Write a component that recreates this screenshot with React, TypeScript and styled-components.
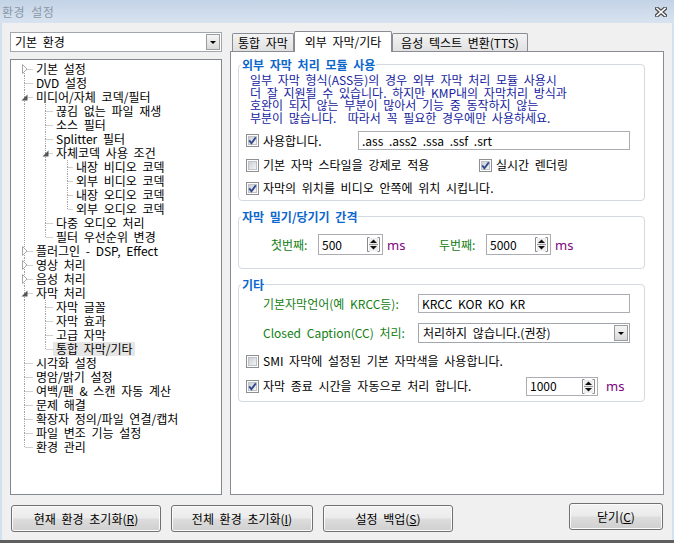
import React from 'react';
import styled, { createGlobalStyle } from 'styled-components';

const GlobalStyle = createGlobalStyle`
  body {
    margin: 0;
    font-family: "Noto Sans CJK KR", "Noto Sans", sans-serif;
    font-size: 12px;
    word-spacing: 3px;
  }
`;

const Window = styled.div`
  width: 674px;
  height: 543px;
  box-sizing: border-box;
  display: flex;
  flex-direction: column;
  background: #f0f0f0;
  border-bottom: 3px solid #5f5f5f;
  color: #000;
`;

const TitleBar = styled.div`
  height: 23px;
  flex: none;
  display: flex;
  align-items: center;
  justify-content: space-between;
  padding: 0 7px 0 2px;
  background: linear-gradient(#c3d3e6, #d8e3f0);
`;

const TitleText = styled.span`
  color: #8b98a8;
  font-size: 12px;
  line-height: 14px;
  letter-spacing: 0.5px;
`;

const Body = styled.div`
  flex: 1;
  display: flex;
  flex-direction: column;
  padding: 8px 8px 0 8px;
  border-left: 2px solid #d3e0ee;
  border-right: 2px solid #d3e0ee;
`;

const Main = styled.div`
  height: 464px;
  display: flex;
  gap: 8px;
`;

const LeftCol = styled.div`
  width: 212px;
  display: flex;
  flex-direction: column;
  gap: 7px;
  padding-top: 1px;
`;

const Combo = styled.div<{ $w?: number }>`
  height: 20px;
  box-sizing: border-box;
  ${(p) => (p.$w ? `width: ${p.$w}px;` : '')}
  display: flex;
  align-items: center;
  justify-content: space-between;
  border: 1px solid #a2a7ae;
  background: #fff;
  padding: 0 1px 0 4px;
  line-height: 14px;
`;

const TreeBox = styled.div`
  flex: 1;
  border: 1px solid #828790;
  background: #fff;
  padding-top: 2px;
`;

const TreeRowEl = styled.div`
  height: 14px;
  display: flex;
  align-items: center;
`;

const TreeLabel = styled.span<{ $selected?: boolean }>`
  line-height: 14px;
  padding: 0 2px 0 3px;
  white-space: pre;
  background: ${(p) => (p.$selected ? '#e6e6e6' : 'transparent')};
`;

const RightCol = styled.div`
  flex: 1;
  display: flex;
  flex-direction: column;
`;

const TabStrip = styled.div`
  height: 20px;
  display: flex;
  align-items: flex-end;
  padding-left: 2px;
`;

const Tab = styled.div<{ $active?: boolean; $w: number }>`
  width: ${(p) => p.$w}px;
  height: ${(p) => (p.$active ? 21 : 18)}px;
  margin-bottom: ${(p) => (p.$active ? -1 : 0)}px;
  box-sizing: border-box;
  position: relative;
  z-index: ${(p) => (p.$active ? 1 : 0)};
  border: 1px solid #898c95;
  border-bottom: none;
  border-radius: 2px 2px 0 0;
  background: ${(p) => (p.$active ? '#fff' : 'linear-gradient(#f3f3f3, #e1e1e1)')};
  display: flex;
  align-items: center;
  justify-content: center;
  line-height: 14px;
  white-space: pre;
`;

const Panel = styled.div`
  flex: 1;
  border: 1px solid #898c95;
  background: #fff;
  padding: 6px 18px 0 7px;
`;

const Group = styled.fieldset<{ $mt?: number; $pb: number }>`
  margin: ${(p) => p.$mt ?? 0}px 0 0 0;
  padding: 0 0 ${(p) => p.$pb}px 0;
  border: 1px solid #d3d9df;
  border-radius: 4px;
  min-width: 0;
`;

const Legend = styled.legend`
  margin-left: 2px;
  padding: 0 1px;
  font-weight: bold;
  color: #0c67cc;
  line-height: 13px;
  font-size: 12px;
`;

const Desc = styled.div`
  margin-top: 3px;
  padding-left: 11px;
  color: #16239e;
  line-height: 12.5px;
  white-space: pre;
`;

const Row = styled.div<{ $mt: number; $h: number; $pl: number }>`
  margin-top: ${(p) => p.$mt}px;
  height: ${(p) => p.$h}px;
  padding-left: ${(p) => p.$pl}px;
  display: flex;
  align-items: center;
`;

const CheckItem = styled.label<{ $w?: number }>`
  display: flex;
  align-items: center;
  gap: 4px;
  ${(p) => (p.$w ? `width: ${p.$w}px;` : '')}
  flex: none;
  line-height: 14px;
  white-space: pre;
`;

const Field = styled.div<{ $w: number; $h: number }>`
  width: ${(p) => p.$w}px;
  height: ${(p) => p.$h}px;
  box-sizing: border-box;
  flex: none;
  border: 1px solid #abadb3;
  background: #fff;
  display: flex;
  align-items: center;
  justify-content: space-between;
  padding: 0 2px 0 3px;
  line-height: 14px;
  white-space: pre;
`;

const Label = styled.span<{ $w: number }>`
  width: ${(p) => p.$w}px;
  flex: none;
  color: #138013;
  line-height: 14px;
  white-space: pre;
`;

const Unit = styled.span<{ $w?: number; $ml: number }>`
  margin-left: ${(p) => p.$ml}px;
  ${(p) => (p.$w ? `width: ${p.$w}px;` : '')}
  flex: none;
  color: #800080;
  font-family: "Noto Sans", sans-serif;
  font-size: 13px;
  line-height: 14px;
`;

const Footer = styled.div`
  margin-top: 8px;
  display: flex;
  align-items: flex-start;
  padding-left: 1px;
  padding-right: 1px;
  gap: 10px;
`;

const Button = styled.div<{ $w: number; $mt: number }>`
  width: ${(p) => p.$w}px;
  height: 27px;
  margin-top: ${(p) => p.$mt}px;
  box-sizing: border-box;
  border: 1px solid #707070;
  border-radius: 3px;
  background: linear-gradient(#f2f2f2 0%, #ebebeb 48%, #dddddd 52%, #cfcfcf 100%);
  box-shadow: inset 0 0 0 1px #fbfbfb;
  display: flex;
  align-items: center;
  justify-content: center;
  line-height: 14px;
  white-space: pre;
`;

const Spacer = styled.div`
  flex: 1;
`;

const Svg = styled.svg`
  display: block;
  flex: none;
`;

const CheckBox = ({ checked }: { checked?: boolean }) => (
  <Svg width={13} height={13} viewBox="0 0 13 13">
    <defs>
      <linearGradient id="cbg" x1="0" y1="0" x2="1" y2="1">
        <stop offset="0" stopColor="#c8ccd3" />
        <stop offset="1" stopColor="#f7f7f7" />
      </linearGradient>
    </defs>
    <rect x={0.5} y={0.5} width={12} height={12} fill="#fdfdfd" stroke="#8e8f8f" />
    <rect x={2.5} y={2.5} width={8} height={8} fill="url(#cbg)" stroke="#bfc3c9" />
    {checked && (
      <path d="M3.2 6.4 L5.4 9.2 L9.8 3.4" fill="none" stroke="#2f478c" strokeWidth={1.8} />
    )}
  </Svg>
);

const DropButton = () => (
  <Svg width={14} height={16} viewBox="0 0 14 16">
    <defs>
      <linearGradient id="dbg" x1="0" y1="0" x2="0" y2="1">
        <stop offset="0" stopColor="#f6f6f6" />
        <stop offset="1" stopColor="#d8d8d8" />
      </linearGradient>
    </defs>
    <rect x={0.5} y={0.5} width={13} height={15} fill="url(#dbg)" stroke="#9c9c9c" />
    <path d="M4 7 L10 7 L7 10 Z" fill="#000" />
  </Svg>
);

const SpinIcon = () => (
  <Svg width={13} height={15} viewBox="0 0 13 15">
    <path d="M2.5 0.5 H0.5 V14.5 H2.5 M10.5 0.5 H12.5 V14.5 H10.5" fill="none" stroke="#8a8a8a" />
    <rect x={2} y={1} width={9} height={13} fill="#eeeeee" />
    <path d="M3 6 L6.5 2.5 L10 6 Z" fill="#111" />
    <line x1={2} y1={7.5} x2={11} y2={7.5} stroke="#9a9a9a" />
    <path d="M3 9 L6.5 12.5 L10 9 Z" fill="#111" />
  </Svg>
);

const CloseIcon = () => (
  <Svg width={12} height={10} viewBox="0 0 12 10">
    <path d="M2 1.5 L10 8.5 M10 1.5 L2 8.5" stroke="#4a4a4a" strokeWidth={4} strokeLinecap="square" />
    <path d="M2 1.5 L10 8.5 M10 1.5 L2 8.5" stroke="#fff" strokeWidth={1.6} strokeLinecap="square" />
  </Svg>
);

type Node = { level: number; text: string; exp?: 'open' | 'closed'; selected?: boolean };

const tree: Node[] = [
  { level: 0, text: '기본 설정', exp: 'closed' },
  { level: 0, text: 'DVD 설정' },
  { level: 0, text: '미디어/자체 코덱/필터', exp: 'open' },
  { level: 1, text: '끊김 없는 파일 재생' },
  { level: 1, text: '소스 필터' },
  { level: 1, text: 'Splitter 필터' },
  { level: 1, text: '자체코덱 사용 조건', exp: 'open' },
  { level: 2, text: '내장 비디오 코덱' },
  { level: 2, text: '외부 비디오 코덱' },
  { level: 2, text: '내장 오디오 코덱' },
  { level: 2, text: '외부 오디오 코덱' },
  { level: 1, text: '다중 오디오 처리' },
  { level: 1, text: '필터 우선순위 변경' },
  { level: 0, text: '플러그인 - DSP, Effect', exp: 'closed' },
  { level: 0, text: '영상 처리', exp: 'closed' },
  { level: 0, text: '음성 처리', exp: 'closed' },
  { level: 0, text: '자막 처리', exp: 'open' },
  { level: 1, text: '자막 글꼴' },
  { level: 1, text: '자막 효과' },
  { level: 1, text: '고급 자막' },
  { level: 1, text: '통합 자막/기타', selected: true },
  { level: 0, text: '시각화 설정' },
  { level: 0, text: '명암/밝기 설정' },
  { level: 0, text: '여백/팬 & 스캔 자동 계산' },
  { level: 0, text: '문제 해결' },
  { level: 0, text: '확장자 정의/파일 연결/캡처' },
  { level: 0, text: '파일 변조 기능 설정' },
  { level: 0, text: '환경 관리' },
];

const lineX = [13, 34, 56];
const textX = [25, 45, 65];

const hasNext = (i: number) => {
  const L = tree[i].level;
  for (let j = i + 1; j < tree.length; j++) {
    if (tree[j].level < L) return false;
    if (tree[j].level === L) return true;
  }
  return false;
};

const ancestorContinues = (i: number, a: number) => {
  for (let k = i - 1; k >= 0; k--) {
    if (tree[k].level === a) return hasNext(k);
  }
  return false;
};

const dot = { stroke: '#a3a3a3', strokeDasharray: '1 1' };

const TreeRow = ({ i }: { i: number }) => {
  const n = tree[i];
  const L = n.level;
  const lx = lineX[L] + 0.5;
  const w = textX[L] - 3;
  const guides = [];
  for (let a = 0; a < L; a++) {
    if (ancestorContinues(i, a)) {
      guides.push(<line key={a} x1={lineX[a] + 0.5} y1={0} x2={lineX[a] + 0.5} y2={14} {...dot} />);
    }
  }
  return (
    <TreeRowEl>
      <Svg width={w} height={14} viewBox={`0 0 ${w} 14`}>
        {guides}
        {i > 0 && <line x1={lx} y1={0} x2={lx} y2={7} {...dot} />}
        {hasNext(i) && <line x1={lx} y1={7} x2={lx} y2={14} {...dot} />}
        <line x1={lx + 1} y1={7.5} x2={w} y2={7.5} {...dot} />
        {n.exp === 'closed' && (
          <path
            d={`M${lx - 2} 2.5 L${lx + 2.5} 7 L${lx - 2} 11.5 Z`}
            fill="#fff"
            stroke="#a6a6a6"
          />
        )}
        {n.exp === 'open' && (
          <path d={`M${lx + 3} 4.5 L${lx + 3} 10.5 L${lx - 3} 10.5 Z`} fill="#555" />
        )}
      </Svg>
      <TreeLabel $selected={n.selected}>{n.text}</TreeLabel>
    </TreeRowEl>
  );
};

const App = () => {
  return (
    <Window>
      <GlobalStyle />
      <TitleBar>
        <TitleText>환경 설정</TitleText>
        <CloseIcon />
      </TitleBar>
      <Body>
        <Main>
          <LeftCol>
            <Combo>
              <span>기본 환경</span>
              <DropButton />
            </Combo>
            <TreeBox>
              {tree.map((_, i) => (
                <TreeRow key={i} i={i} />
              ))}
            </TreeBox>
          </LeftCol>
          <RightCol>
            <TabStrip>
              <Tab $w={62}>통합 자막</Tab>
              <Tab $w={98} $active>
                외부 자막/기타
              </Tab>
              <Tab $w={136}>음성 텍스트 변환(TTS)</Tab>
            </TabStrip>
            <Panel>
              <Group $pb={2}>
                <Legend>외부 자막 처리 모듈 사용</Legend>
                <Desc>
                  {'일부 자막 형식(ASS등)의 경우 외부 자막 처리 모듈 사용시\n더 잘 지원될 수 있습니다. 하지만 KMP내의 자막처리 방식과\n호완이 되지 않는 부분이 많아서 기능 중 동작하지 않는\n부분이 많습니다.  따라서 꼭 필요한 경우에만 사용하세요.'}
                </Desc>
                <Row $mt={7} $h={19} $pl={7}>
                  <CheckItem $w={112}>
                    <CheckBox checked />
                    사용합니다.
                  </CheckItem>
                  <Field $w={272} $h={19}>.ass .ass2 .ssa .ssf .srt</Field>
                </Row>
                <Row $mt={5} $h={20} $pl={7}>
                  <CheckItem $w={233}>
                    <CheckBox />
                    기본 자막 스타일을 강제로 적용
                  </CheckItem>
                  <CheckItem>
                    <CheckBox checked />
                    실시간 렌더링
                  </CheckItem>
                </Row>
                <Row $mt={3} $h={20} $pl={7}>
                  <CheckItem>
                    <CheckBox checked />
                    자막의 위치를 비디오 안쪽에 위치 시킵니다.
                  </CheckItem>
                </Row>
              </Group>

              <Group $mt={9} $pb={13}>
                <Legend>자막 밀기/당기기 간격</Legend>
                <Row $mt={11} $h={21} $pl={32}>
                  <Label $w={47}>첫번째:</Label>
                  <Field $w={65} $h={21}>
                    500
                    <SpinIcon />
                  </Field>
                  <Unit $ml={4} $w={52}>ms</Unit>
                  <Label $w={47}>두번째:</Label>
                  <Field $w={65} $h={21}>
                    5000
                    <SpinIcon />
                  </Field>
                  <Unit $ml={4}>ms</Unit>
                </Row>
              </Group>

              <Group $mt={9} $pb={5}>
                <Legend>기타</Legend>
                <Row $mt={3} $h={19} $pl={24}>
                  <Label $w={155}>기본자막언어(예 KRCC등):</Label>
                  <Field $w={212} $h={19}>KRCC KOR KO KR</Field>
                </Row>
                <Row $mt={10} $h={20} $pl={24}>
                  <Label $w={155}>Closed Caption(CC) 처리:</Label>
                  <Combo $w={212}>
                    <span>처리하지 않습니다.(권장)</span>
                    <DropButton />
                  </Combo>
                </Row>
                <Row $mt={8} $h={20} $pl={7}>
                  <CheckItem>
                    <CheckBox />
                    SMI 자막에 설정된 기본 자막색을 사용합니다.
                  </CheckItem>
                </Row>
                <Row $mt={5} $h={20} $pl={7}>
                  <CheckItem $w={280}>
                    <CheckBox checked />
                    자막 종료 시간을 자동으로 처리 합니다.
                  </CheckItem>
                  <Field $w={72} $h={19}>
                    1000
                    <SpinIcon />
                  </Field>
                  <Unit $ml={8}>ms</Unit>
                </Row>
              </Group>
            </Panel>
          </RightCol>
        </Main>
        <Footer>
          <Button $w={150} $mt={2}>
            <span>
              현재 환경 초기화(<u>R</u>)
            </span>
          </Button>
          <Button $w={142} $mt={2}>
            <span>
              전체 환경 초기화(<u>I</u>)
            </span>
          </Button>
          <Button $w={130} $mt={2}>
            <span>
              설정 백업(<u>S</u>)
            </span>
          </Button>
          <Spacer />
          <Button $w={94} $mt={0}>
            <span>
              닫기(<u>C</u>)
            </span>
          </Button>
        </Footer>
      </Body>
    </Window>
  );
};

export default App;
